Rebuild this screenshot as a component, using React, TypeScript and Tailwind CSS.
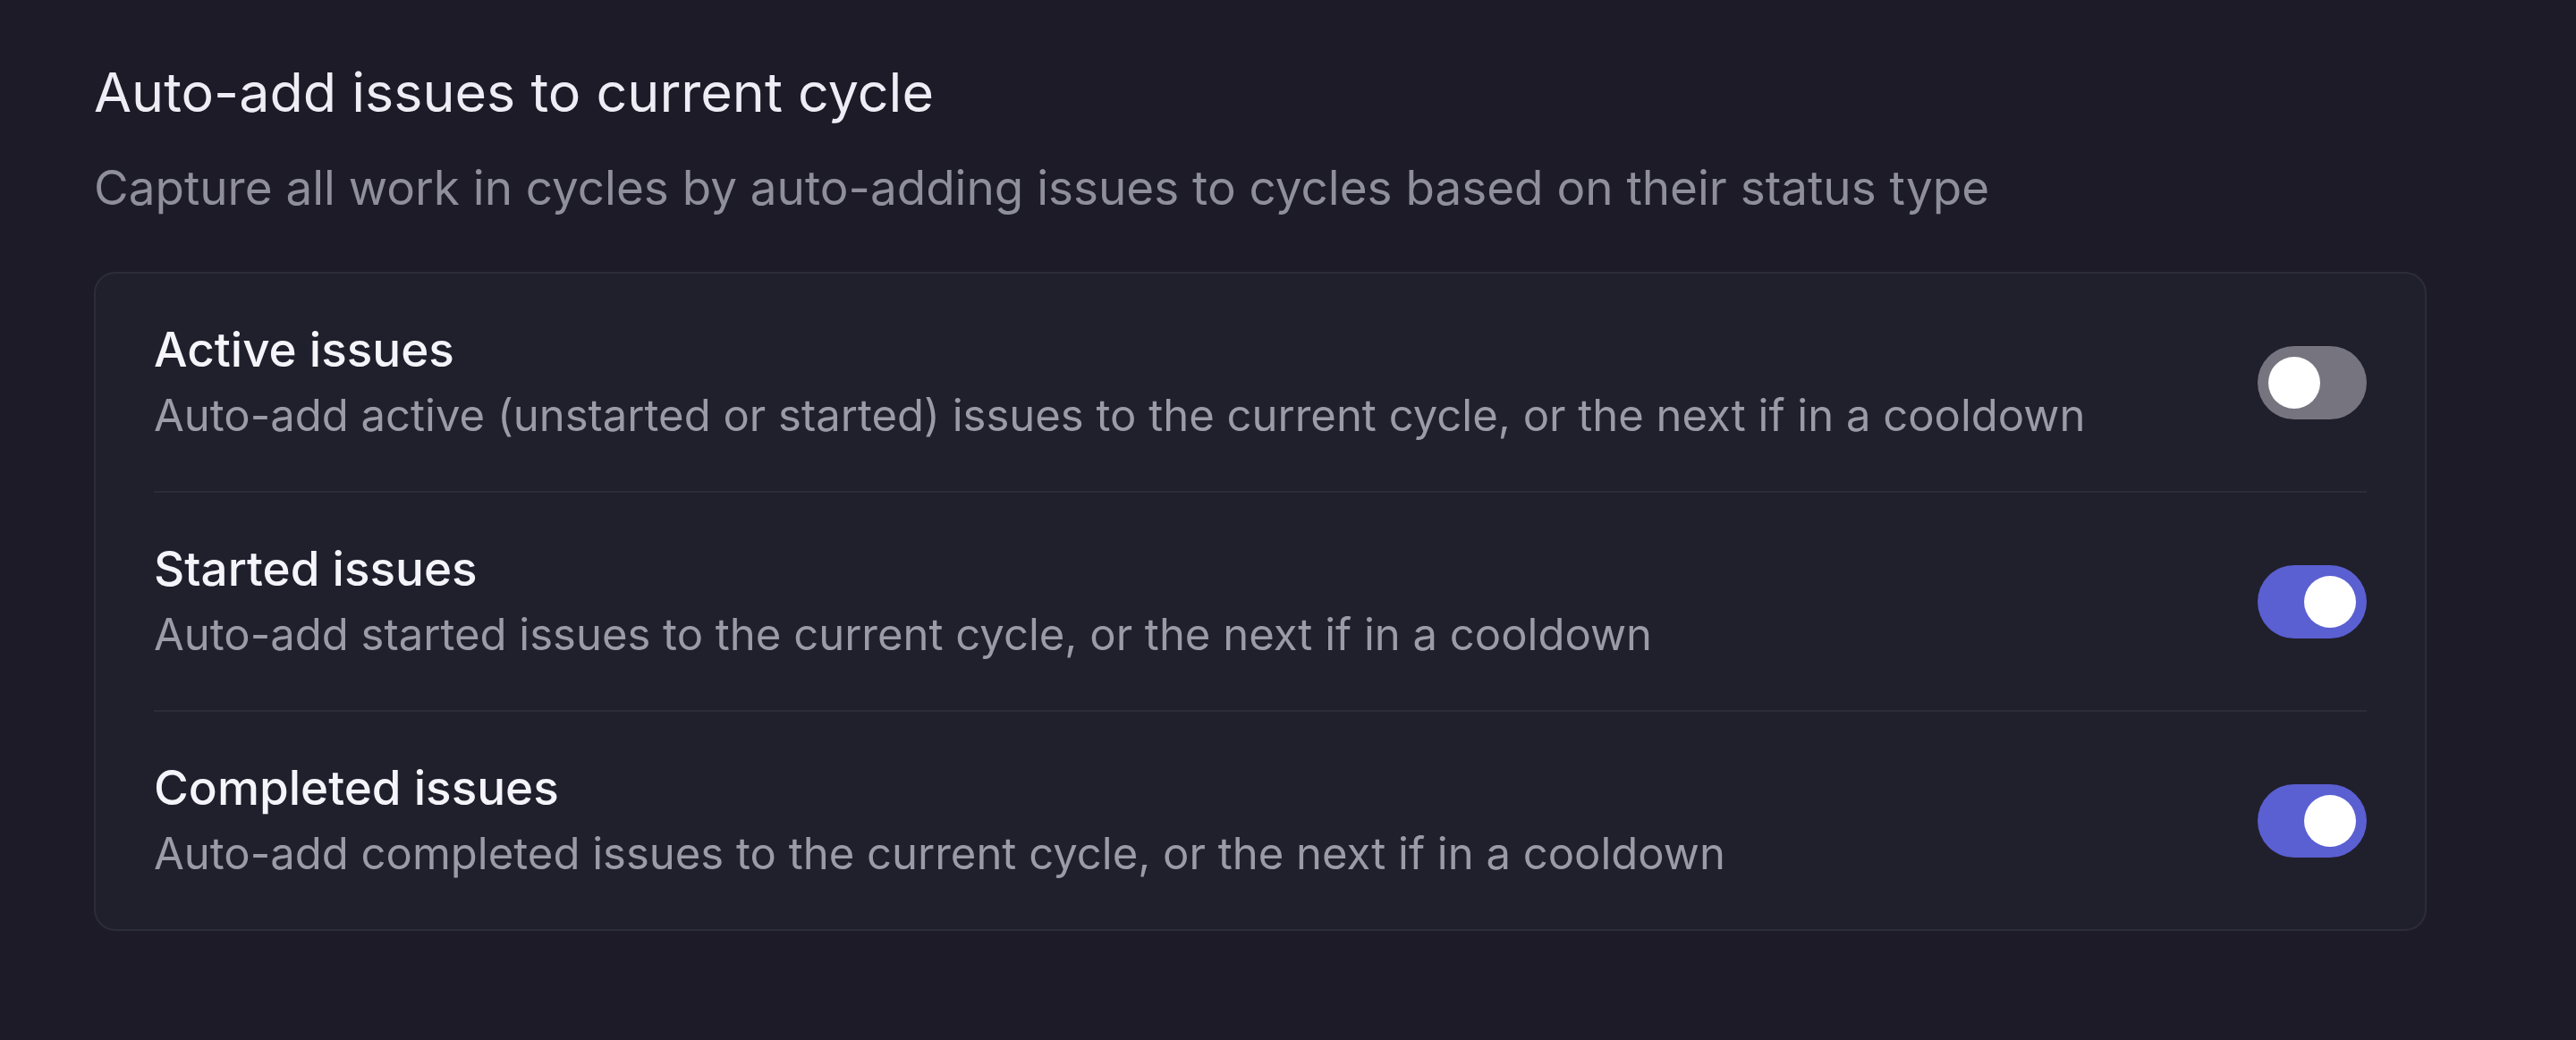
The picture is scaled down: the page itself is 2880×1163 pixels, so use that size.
const rows = [
  {
    title: "Active issues",
    desc: "Auto-add active (unstarted or started) issues to the current cycle, or the next if in a cooldown",
    on: false,
  },
  {
    title: "Started issues",
    desc: "Auto-add started issues to the current cycle, or the next if in a cooldown",
    on: true,
  },
  {
    title: "Completed issues",
    desc: "Auto-add completed issues to the current cycle, or the next if in a cooldown",
    on: true,
  },
];

function Toggle({ on }: { on: boolean }) {
  return (
    <div
      className={
        on
          ? "flex h-[82px] w-[122px] shrink-0 items-center justify-end rounded-full bg-[#5a5fd1] p-[12px]"
          : "flex h-[82px] w-[122px] shrink-0 items-center justify-start rounded-full bg-[#76747f] p-[12px]"
      }
    >
      <div className="h-[58px] w-[58px] rounded-full bg-white" />
    </div>
  );
}

export default function App() {
  return (
    <div
      className="min-h-screen bg-[#1c1b27] pl-[105px] pt-[68px]"
      style={{ fontFamily: "Inter, 'Noto Sans', sans-serif" }}
    >
      <h2 className="text-[61px] leading-[70px] font-normal text-[#eeedf5]">
        Auto-add issues to current cycle
      </h2>
      <p className="mt-[42px] text-[53px] leading-[60px] text-[#8f8e9b]">
        Capture all work in cycles by auto-adding issues to cycles based on their status type
      </p>

      <div className="mt-[64px] w-[2608px] rounded-[24px] border-2 border-[#2d2c3a] bg-[#201f2c] px-[65px]">
        {rows.map((row, i) => (
          <div
            key={row.title}
            className={
              i === 0
                ? "flex h-[243px] items-center justify-between"
                : "flex h-[245px] items-center justify-between border-t-2 border-[#2c2b39]"
            }
          >
            <div className="flex flex-col gap-[10px]">
              <div className="text-[53px] leading-[64px] font-medium text-[#f5f4fa]">
                {row.title}
              </div>
              <div className="text-[49px] leading-[64px] text-[#9b9aa7]">{row.desc}</div>
            </div>
            <Toggle on={row.on} />
          </div>
        ))}
      </div>
    </div>
  );
}
